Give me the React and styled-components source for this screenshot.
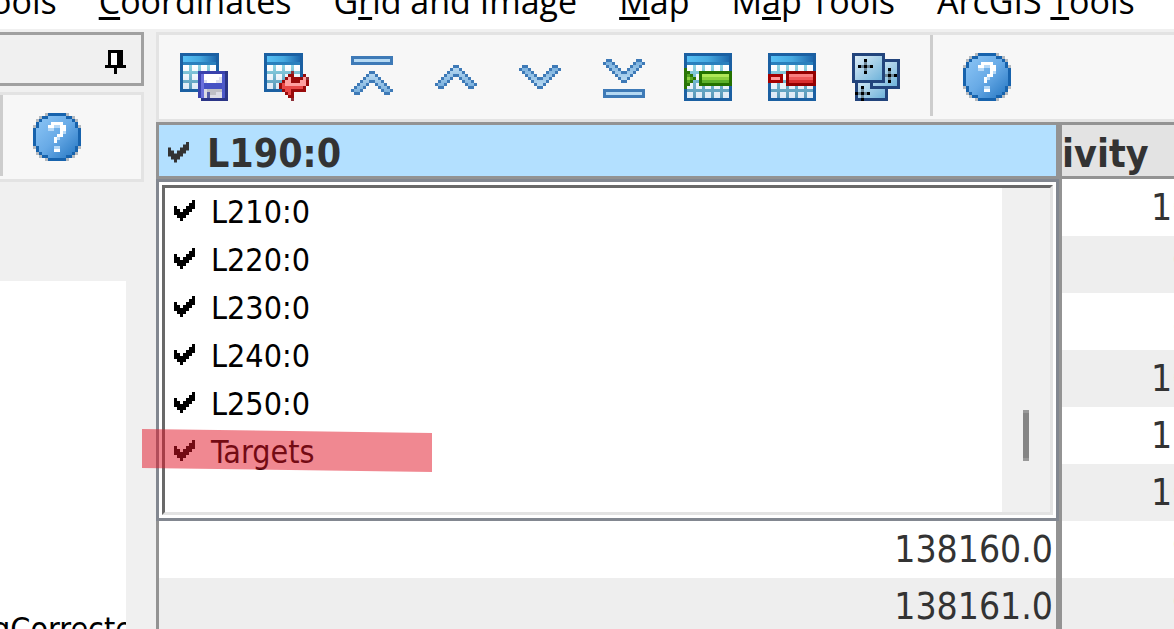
import { useId, useState } from "react"
import styled, { createGlobalStyle } from "styled-components"


const lines = ["L210:0", "L220:0", "L230:0", "L240:0", "L250:0", "Targets"]

const rows = [
    { value: "", reading: "10" },
    { value: "", reading: "9" },
    { value: "", reading: "8" },
    { value: "", reading: "10" },
    { value: "", reading: "12" },
    { value: "", reading: "10" },
    { value: "138160.0", reading: "9" },
    { value: "138161.0", reading: "9" },
]

// [before the access key, access key, after it]
const menus = [
    ["ools", "", ""],
    ["", "C", "oordinates"],
    ["G", "r", "id and Image"],
    ["", "M", "ap"],
    ["M", "a", "p Tools"],
    ["ArcGIS ", "T", "ools"],
]

const GlobalStyle = createGlobalStyle`
    * {
        box-sizing: border-box;
    }

    body {
        margin: 0;
        background-color: #f0f0f0;
        font-family: "DejaVu Sans Condensed", "DejaVu Sans", sans-serif;
        font-stretch: condensed;
        font-size: 32px;
        color: #000;
    }

    button {
        padding: 0;
        border: 0;
        background: none;
        font: inherit;
        color: inherit;
    }
`

const Page = styled.div`
    display: flex;
    flex-direction: column;
    height: 100vh;
    overflow: hidden;
`

const MenuBar = styled.nav`
    display: flex;
    align-items: flex-end;
    gap: 42px;
    flex: none;
    height: 29px;
    margin-left: -9px;
    overflow: hidden;
    background-color: #fff;
`

const MenuItem = styled.button`
    flex: none;
    font-family: "Open Sans", "Noto Sans", sans-serif;
    font-stretch: normal;
    font-size: 34px;
    line-height: 56px;
    white-space: nowrap;
`

const AccessKey = styled.span`
    text-decoration: underline;
    text-decoration-thickness: 3px;
    text-decoration-skip-ink: none;
    text-underline-offset: 3px;
`

const Workspace = styled.div`
    display: grid;
    grid-template-columns: 144px minmax(0, 1fr);
    column-gap: 12px;
    flex: 1;
    min-height: 0;
    padding-top: 3px;
`

const Dock = styled.aside`
    display: flex;
    flex-direction: column;
    min-height: 0;
`

const DockTitle = styled.header`
    display: flex;
    align-items: center;
    justify-content: flex-end;
    flex: none;
    height: 54px;
    padding: 6px 15px 0 0;
    border: 3px solid #a0a0a0;
    border-left: 0;
    margin-bottom: 6px;
`

const DockTools = styled.div`
    display: flex;
    align-items: center;
    gap: 30px;
    flex: none;
    height: 90px;
    border: 3px solid #e3e3e3;
    border-left: 0;
    margin-bottom: 99px;
    background-color: #f7f7f7;
`

const Tree = styled.div`
    flex: 1;
    min-height: 0;
    margin-right: 18px;
    padding-top: 328px;
    overflow: hidden;
    background-color: #fff;
`

const TreeItem = styled.div`
    line-height: 40px;
    text-indent: -8px;
    white-space: nowrap;
`

const Main = styled.main`
    display: flex;
    flex-direction: column;
    min-width: 0;
    min-height: 0;
`

const Toolbar = styled.div`
    display: flex;
    align-items: center;
    gap: 30px;
    flex: none;
    height: 90px;
    padding-left: 21px;
    border: 3px solid #e3e3e3;
    border-right: 0;
    background-color: #f7f7f7;
`

const ToolGroup = styled.div`
    display: flex;
    gap: 36px;
`

const Divider = styled.span`
    align-self: flex-start;
    flex: none;
    width: 3px;
    height: 81px;
    background-color: #cdcdcd;
`

const ToolButton = styled.button`
    display: block;
    flex: none;
    width: 48px;
    height: 48px;
`

const Icon = styled.svg`
    display: block;
    width: ${(props) => props.$width || 48}px;
    height: ${(props) => props.$height || 48}px;
    shape-rendering: crispEdges;
`

const Sheet = styled.section`
    position: relative;
    flex: 1;
    min-height: 0;
    border: 3px solid #939393;
    border-right: 0;
    border-bottom: 0;
`

const Table = styled.table`
    width: 100%;
    table-layout: fixed;
    border-spacing: 0;
    font-size: 37px;
    color: #333;
`

const HeadCell = styled.th`
    width: ${(props) => props.$width || "auto"};
    height: 54px;
    padding: 0;
    border-right: ${(props) => (props.$last ? "0" : "6px solid #939393")};
    border-bottom: 3px solid #939393;
    overflow: hidden;
    background-color: ${(props) => (props.$active ? "#b3e0ff" : "#e3e3e3")};
    font-size: 39px;
    line-height: 45px;
    text-align: left;
    vertical-align: bottom;
    white-space: nowrap;
`

const LineButton = styled.button`
    display: flex;
    align-items: center;
    gap: 18px;
    width: 100%;
    height: 45px;
    padding-left: 9px;
`

const Cell = styled.td`
    height: 57px;
    padding: 0 3px 0 ${(props) => (props.$reading ? "89px" : "0")};
    border-right: ${(props) => (props.$reading ? "0" : "6px solid #939393")};
    overflow: hidden;
    background-color: ${(props) => (props.$shaded ? "#eee" : "#fff")};
    line-height: 45px;
    text-align: ${(props) => (props.$reading ? "left" : "right")};
    white-space: nowrap;
`

const Popup = styled.div`
    position: absolute;
    top: 54px;
    left: -3px;
    right: 115px;
    padding: 3px;
    border: 3px solid #828790;
    background-color: #fff;
`

const ListFrame = styled.div`
    display: flex;
    border-top: 3px solid #696969;
    border-left: 3px solid #696969;
    border-right: 3px solid #e3e3e3;
    border-bottom: 3px solid #e3e3e3;
`

const List = styled.ul`
    flex: 1;
    margin: 0;
    padding: 0 0 36px;
    list-style: none;
`

const ListItem = styled.li`
    position: relative;
`

const LineLabel = styled.label`
    display: flex;
    align-items: center;
    gap: 16px;
    height: 48px;
    padding-left: 9px;
`

const tickShape = `polygon(
    0 6px, 3px 6px, 3px 9px, 6px 9px, 6px 12px, 9px 12px, 9px 9px, 12px 9px,
    12px 6px, 15px 6px, 15px 3px, 18px 3px, 18px 0, 21px 0, 21px 9px, 18px 9px,
    18px 12px, 15px 12px, 15px 15px, 12px 15px, 12px 18px, 9px 18px, 9px 21px,
    6px 21px, 6px 18px, 3px 18px, 3px 15px, 0 15px
)`

const Tick = styled.span`
    flex: none;
    width: 21px;
    height: 21px;
    margin-bottom: 3px;
    background-color: #333;
    clip-path: ${tickShape};
`

const TickBox = styled.input`
    appearance: none;
    flex: none;
    width: 21px;
    height: 21px;
    margin: 0 0 3px;

    &:checked {
        background-color: #000;
        clip-path: ${tickShape};
    }
`

const Marker = styled.span`
    position: absolute;
    top: 1px;
    left: -23px;
    width: 290px;
    height: 43px;
    background-color: rgba(225, 22, 39, 0.51);
    clip-path: polygon(0 0, 100% 4px, 100% 100%, 0 39px);
    pointer-events: none;
`

const ScrollTrack = styled.div`
    flex: none;
    width: 48px;
    padding: 222px 21px 0;
    background-color: #f0f0f0;
`

const ScrollThumb = styled.div`
    height: 51px;
    border-top: 3px solid #999;
    border-bottom: 3px solid #999;
    background-color: #858585;
`

// one run per entry: [row, first column, column after the last]
const runs = (list) =>
    list.map(([y, from, to]) => `M${from} ${y}H${to}V${y + 1}H${from}Z`).join("")

const mirror = (list) =>
    list.flatMap(([y, from, to]) => [[y, from, to], [y, 16 - to, 16 - from]])

const chevronEdge = mirror([
    [0, 7, 8], [1, 6, 7], [2, 5, 6], [3, 4, 5], [3, 7, 8], [4, 3, 4], [4, 6, 7],
    [5, 2, 3], [5, 5, 6], [6, 1, 2], [6, 4, 5], [7, 2, 4],
])

const chevronFill = mirror([
    [1, 7, 8], [2, 6, 8], [3, 5, 7], [4, 4, 6], [5, 3, 5], [6, 2, 4],
])

function ChevronIcon({ top, down, bar }) {
    const id = useId()
    const place = down ? `translate(0 ${top + 8}) scale(1 -1)` : `translate(0 ${top})`

    return (
        <Icon viewBox="0 0 16 16">
            <linearGradient id={id} x1="0" y1="0" x2="0" y2="1">
                <stop offset="0" stopColor="#b5d7f0" />
                <stop offset="1" stopColor="#7db2de" />
            </linearGradient>
            <g transform={place}>
                <path d={runs(chevronFill)} fill={`url(#${id})`} />
                <path d={runs(chevronEdge)} fill="#3e7ab7" />
            </g>
            {bar !== undefined && (
                <>
                    <rect x="1" y={bar} width="14" height="3" fill="#3e7ab7" />
                    <rect x="2" y={bar + 1} width="12" height="1" fill="#b5d9f3" />
                </>
            )}
        </Icon>
    )
}

function TableArt({ size }) {
    const id = useId()
    const marks = size === 16 ? [3, 6, 9, 12] : [3, 6, 9]

    return (
        <>
            <linearGradient id={`${id}t`}>
                <stop offset="0" stopColor="#56c0f5" />
                <stop offset="0.5" stopColor="#45a9e0" />
                <stop offset="1" stopColor="#1d68ad" />
            </linearGradient>
            <linearGradient id={`${id}g`} x1="0" y1="0" x2="0" y2="1">
                <stop offset="0" stopColor="#8fd6e4" />
                <stop offset="1" stopColor="#5796b8" />
            </linearGradient>
            <linearGradient id={`${id}c`} x1="0" y1="0" x2="0" y2="1">
                <stop offset="0" stopColor="#fff" />
                <stop offset="1" stopColor="#dce9f5" />
            </linearGradient>
            <rect width={size} height={size} fill="#1b60a2" />
            <rect x="1" y="1" width={size - 2} height="2" fill={`url(#${id}t)`} />
            <rect x="1" y="3" width={size - 2} height="1" fill="#2a80bd" />
            <rect x="1" y="4" width={size - 2} height={size - 5} fill={`url(#${id}g)`} />
            <path
                fill={`url(#${id}c)`}
                d={[1, ...marks.map((m) => m + 1)]
                    .flatMap((x) => [4, ...marks.slice(1).map((m) => m + 1)].map((y) => `M${x} ${y}h2v2h-2z`))
                    .join("")}
            />
        </>
    )
}

function SaveTableIcon() {
    return (
        <Icon viewBox="0 0 16 16">
            <TableArt size={13} />
            <path d="M6 6H16V16H7V15H6Z" fill="#3a42ad" />
            <path d="M15 6h1v10h-9v-1h8z" fill="#2b3587" />
            <rect x="7" y="7" width="1" height="8" fill="#6a70dc" />
            <rect x="8" y="10" width="6" height="2" fill="#4652c4" />
            <rect x="14" y="7" width="1" height="8" fill="#4d59c9" />
            <rect x="8" y="7" width="6" height="3" fill="#fff" />
            <path d="M8 9h1v1h-1zM13 8h1v2h-2v-1h1z" fill="#dedff0" />
            <rect x="8" y="12" width="6" height="3" fill="#dcdce4" />
            <path d="M9 12h5v1h-5zM10 13h2v1h-2z" fill="#bfbfc4" />
            <rect x="9" y="13" width="1" height="2" fill="#555da6" />
        </Icon>
    )
}

function RevertTableIcon() {
    return (
        <Icon viewBox="0 0 16 16">
            <TableArt size={13} />
            <path
                fill="#990b0b"
                d={runs([
                    [6, 9, 10], [7, 8, 10], [7, 13, 14], [8, 7, 15], [9, 6, 15], [10, 5, 15],
                    [11, 5, 14], [12, 6, 14], [13, 7, 10], [14, 8, 10], [15, 9, 10],
                ])}
            />
            <path d={runs([[8, 8, 9], [8, 13, 14], [9, 7, 9], [9, 12, 14], [10, 7, 14]])} fill="#ffa0a0" />
            <path d={runs([[10, 6, 7], [11, 6, 13], [12, 7, 9], [13, 8, 9]])} fill="#e84848" />
            <path d={runs([[6, 9, 10], [8, 14, 15], [15, 9, 10]])} fill="#8d3038" />
        </Icon>
    )
}

function InsertRowIcon() {
    return (
        <Icon viewBox="0 0 16 16">
            <TableArt size={16} />
            <path d="M0 5h1v1h1v1h1v1h1v1h-1v1h-1v1h-1v1h-1z" fill="#2a7607" />
            <path d="M1 7h1v1h1v1h-1v1h-1z" fill="#55a621" />
            <rect x="1" y="8" width="1" height="1" fill="#8fd044" />
            <rect x="5" y="6" width="11" height="5" fill="#247200" />
            <rect x="6" y="7" width="9" height="1" fill="#afe856" />
            <rect x="6" y="8" width="9" height="1" fill="#8bd03c" />
            <rect x="6" y="9" width="9" height="1" fill="#5cb02c" />
        </Icon>
    )
}

function DeleteRowIcon() {
    return (
        <Icon viewBox="0 0 16 16">
            <TableArt size={16} />
            <rect y="7" width="5" height="3" fill="#a50000" />
            <rect x="1" y="8" width="3" height="1" fill="#ff9797" />
            <rect x="6" y="6" width="10" height="5" fill="#930000" />
            <rect x="7" y="7" width="8" height="1" fill="#fa8080" />
            <rect x="7" y="8" width="8" height="1" fill="#ef5959" />
            <rect x="7" y="9" width="8" height="1" fill="#d92e2e" />
        </Icon>
    )
}

function CrossDots({ x, y }) {
    return (
        <g transform={`translate(${x} ${y})`}>
            <path d="M-1 0h3v1h-3zM0 -1h1v3h-1z" fill="#6d8798" />
            <path d="M0 -2h1v1h-1zM0 2h1v1h-1zM-2 0h1v1h-1zM2 0h1v1h-1zM0 0h1v1h-1z" fill="#000" />
        </g>
    )
}

function SheetsIcon() {
    const id = useId()
    const fill = `url(#${id})`

    return (
        <Icon viewBox="0 0 16 16">
            <linearGradient id={id} x1="0" y1="0" x2="1" y2="1">
                <stop offset="0" stopColor="#dcecf7" />
                <stop offset="1" stopColor="#6fb3da" />
            </linearGradient>
            <rect x="1" y="7" width="11" height="9" fill="#22447c" />
            <rect x="2" y="8" width="9" height="7" fill={fill} />
            <CrossDots x={3} y={13} />
            <rect x="6" y="2" width="10" height="10" fill="#22447c" />
            <rect x="7" y="3" width="8" height="8" fill={fill} />
            <CrossDots x={12} y={7} />
            <rect width="11" height="10" fill="#22447c" />
            <rect x="1" y="1" width="9" height="8" fill={fill} />
            <CrossDots x={4} y={4} />
        </Icon>
    )
}

const discInsets = [5, 3, 2, 1, 1, 0, 0, 0, 0, 0, 0, 1, 1, 2, 3, 5]
const coreInsets = [5, 3, 2, 2, 1, 1, 1, 1, 1, 1, 2, 2, 3, 5]

function HelpIcon() {
    const id = useId()

    return (
        <Icon viewBox="0 0 16 16">
            <linearGradient id={id} x1="0" y1="0" x2="1" y2="1">
                <stop offset="0.1" stopColor="#86c1f3" />
                <stop offset="0.5" stopColor="#68aae6" />
                <stop offset="1" stopColor="#2476c2" />
            </linearGradient>
            <path
                fill="#b3b9bf"
                d={runs([
                    [0, 4, 12], [1, 2, 14], [2, 1, 15], [4, 0, 16], [11, 0, 16], [13, 1, 15], [14, 2, 14], [15, 4, 12],
                ])}
            />
            <path d={runs(discInsets.map((inset, y) => [y, inset, 16 - inset]))} fill="#1763ad" />
            <path d={runs(coreInsets.map((inset, y) => [y + 1, inset, 16 - inset]))} fill={`url(#${id})`} />
            <path d={runs([[4, 5, 11], [5, 5, 7], [6, 9, 11], [8, 7, 9], [11, 7, 9]])} fill="#b5d8f7" />
            <path
                fill="#fff"
                d={runs([[3, 6, 10], [4, 5, 7], [4, 9, 11], [5, 9, 11], [6, 9, 10], [7, 8, 10], [8, 7, 8], [9, 7, 8], [12, 7, 9]])}
            />
        </Icon>
    )
}

function PinIcon() {
    return (
        <Icon $width={21} $height={24} viewBox="0 0 7 8">
            <rect x="2" y="1" width="2" height="4" fill="#fff" />
            <path d="M1 0h5v5h1v1h-3v2h-1v-2h-3v-1h1zM2 1v4h2v-4z" />
        </Icon>
    )
}

function LineList() {
    const [hidden, setHidden] = useState([])

    const toggle = (name) =>
        setHidden(hidden.includes(name) ? hidden.filter((n) => n !== name) : [...hidden, name])

    return (
        <Popup>
            <ListFrame>
                <List>
                    {lines.map((name) => (
                        <ListItem key={name}>
                            <LineLabel>
                                <TickBox
                                    type="checkbox"
                                    checked={!hidden.includes(name)}
                                    onChange={() => toggle(name)}
                                />
                                {name}
                            </LineLabel>
                            {name === "Targets" && <Marker />}
                        </ListItem>
                    ))}
                </List>
                <ScrollTrack>
                    <ScrollThumb />
                </ScrollTrack>
            </ListFrame>
        </Popup>
    )
}

export default function App() {
    return (
        <Page>
            <GlobalStyle />
            <MenuBar>
                {menus.map(([before, key, after]) => (
                    <MenuItem key={before + key + after}>
                        {before}
                        <AccessKey>{key}</AccessKey>
                        {after}
                    </MenuItem>
                ))}
            </MenuBar>
            <Workspace>
                <Dock>
                    <DockTitle>
                        <button aria-label="Pin">
                            <PinIcon />
                        </button>
                    </DockTitle>
                    <DockTools>
                        <Divider />
                        <ToolButton aria-label="Help"><HelpIcon /></ToolButton>
                    </DockTools>
                    <Tree>
                        <TreeItem>gCorrecte</TreeItem>
                    </Tree>
                </Dock>
                <Main>
                    <Toolbar>
                        <ToolGroup>
                            <ToolButton aria-label="Save table"><SaveTableIcon /></ToolButton>
                            <ToolButton aria-label="Revert table"><RevertTableIcon /></ToolButton>
                            <ToolButton aria-label="First line"><ChevronIcon top={6} bar={1} /></ToolButton>
                            <ToolButton aria-label="Previous line"><ChevronIcon top={4} /></ToolButton>
                            <ToolButton aria-label="Next line"><ChevronIcon top={4} down /></ToolButton>
                            <ToolButton aria-label="Last line"><ChevronIcon top={2} bar={12} down /></ToolButton>
                            <ToolButton aria-label="Insert row"><InsertRowIcon /></ToolButton>
                            <ToolButton aria-label="Delete row"><DeleteRowIcon /></ToolButton>
                            <ToolButton aria-label="Copy sheets"><SheetsIcon /></ToolButton>
                        </ToolGroup>
                        <Divider />
                        <ToolButton aria-label="Help"><HelpIcon /></ToolButton>
                    </Toolbar>
                    <Sheet>
                        <Table>
                            <thead>
                                <tr>
                                    <HeadCell $active>
                                        <LineButton aria-haspopup="true">
                                            <Tick />
                                            L190:0
                                        </LineButton>
                                    </HeadCell>
                                    <HeadCell $width="112px" $last>ivity</HeadCell>
                                </tr>
                            </thead>
                            <tbody>
                                {rows.map((row, i) => (
                                    <tr key={i}>
                                        <Cell $shaded={i % 2 === 1}>{row.value}</Cell>
                                        <Cell $shaded={i % 2 === 1} $reading>
                                            {row.reading.padStart(2, "\u2007")}
                                        </Cell>
                                    </tr>
                                ))}
                            </tbody>
                        </Table>
                        <LineList />
                    </Sheet>
                </Main>
            </Workspace>
        </Page>
    )
}
